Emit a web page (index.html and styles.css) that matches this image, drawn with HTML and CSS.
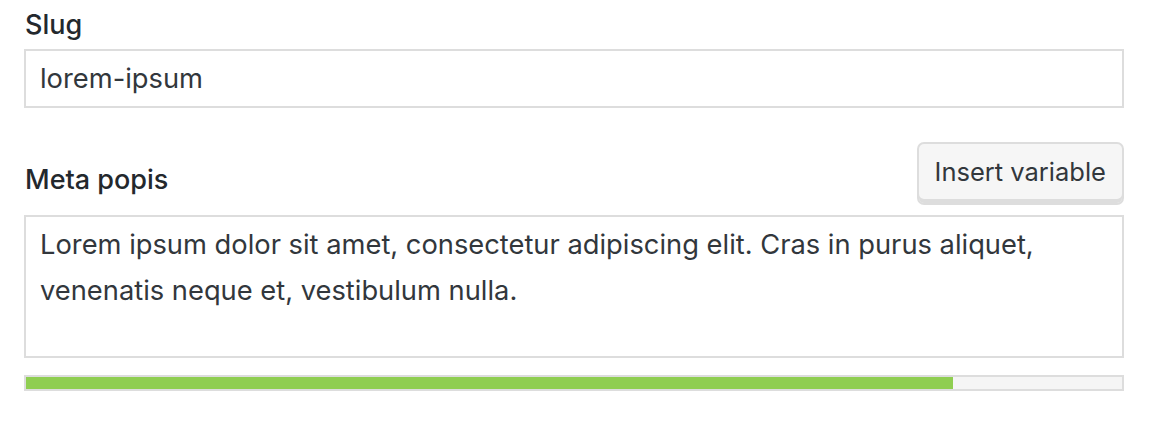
FILE: index.html
```html
<!DOCTYPE html>
<html lang="en">
<head>
  <meta charset="UTF-8" />
  <meta name="viewport" content="width=device-width, initial-scale=1.0" />
  <title>SEO fields</title>
  <link rel="stylesheet" href="styles.css">
</head>
<body>

  <div class="container">
    <div class="field">
      <label for="slug" class="label">Slug</label>
      <input type="text" id="slug" class="text-input" value="lorem-ipsum" />
    </div>

    <div class="field field-meta">
      <div class="label-row">
        <label for="metaDesc" class="label">Meta popis</label>
        <button class="btn">Insert variable</button>
      </div>
      <textarea id="metaDesc" class="text-area">Lorem ipsum dolor sit amet, consectetur adipiscing elit. Cras in purus aliquet, venenatis neque et, vestibulum nulla.</textarea>
      <div class="progress">
        <div class="progress-fill" style="width: 84.6%"></div>
      </div>
    </div>
  </div>

</body>
</html>
```

FILE: styles.css
```css
html, body {
  margin: 0;
  padding: 0;
  background: #fff;
  font-family: Inter, 'Noto Sans', sans-serif;
  color: #32373c;
}

.container {
  width: 1100px;
  padding: 0 34px 0 24px;
}

.field {
  display: flex;
  flex-direction: column;
}

.label {
  display: block;
  font-size: 27px;
  font-weight: 500;
  color: #23282d;
  line-height: 30px;
  padding-left: 1px;
}

.field > .label {
  margin: 10px 0 9px;
}

.text-input, .text-area {
  width: 100%;
  box-sizing: border-box;
  border: 2px solid #ddd;
  font-family: inherit;
  font-size: 27.3px;
  color: #32373c;
  background: #fff;
  margin: 0;
  outline: none;
}

.text-input {
  height: 59px;
  padding: 0 14px;
}

.field-meta {
  margin-top: 34px;
}

.label-row {
  display: flex;
  justify-content: space-between;
  align-items: flex-end;
  margin-bottom: 10px;
}

.label-row .label {
  margin-bottom: 10px;
}

.btn {
  height: 63px;
  padding: 0 16px 4px;
  font-family: inherit;
  font-size: 25.5px;
  color: #32373c;
  background: #f6f6f6;
  border: 2px solid #ddd;
  border-radius: 7px;
  box-shadow: inset 0 -4px 0 #ddd;
  cursor: pointer;
}

.text-area {
  display: block;
  height: 143px;
  padding: 5px 14px;
  line-height: 46px;
  resize: none;
}

.progress {
  margin-top: 17px;
  height: 16px;
  box-sizing: border-box;
  border: 2px solid #ddd;
  background: #f5f5f5;
}

.progress-fill {
  height: 100%;
  background: #8fce51;
}
```
